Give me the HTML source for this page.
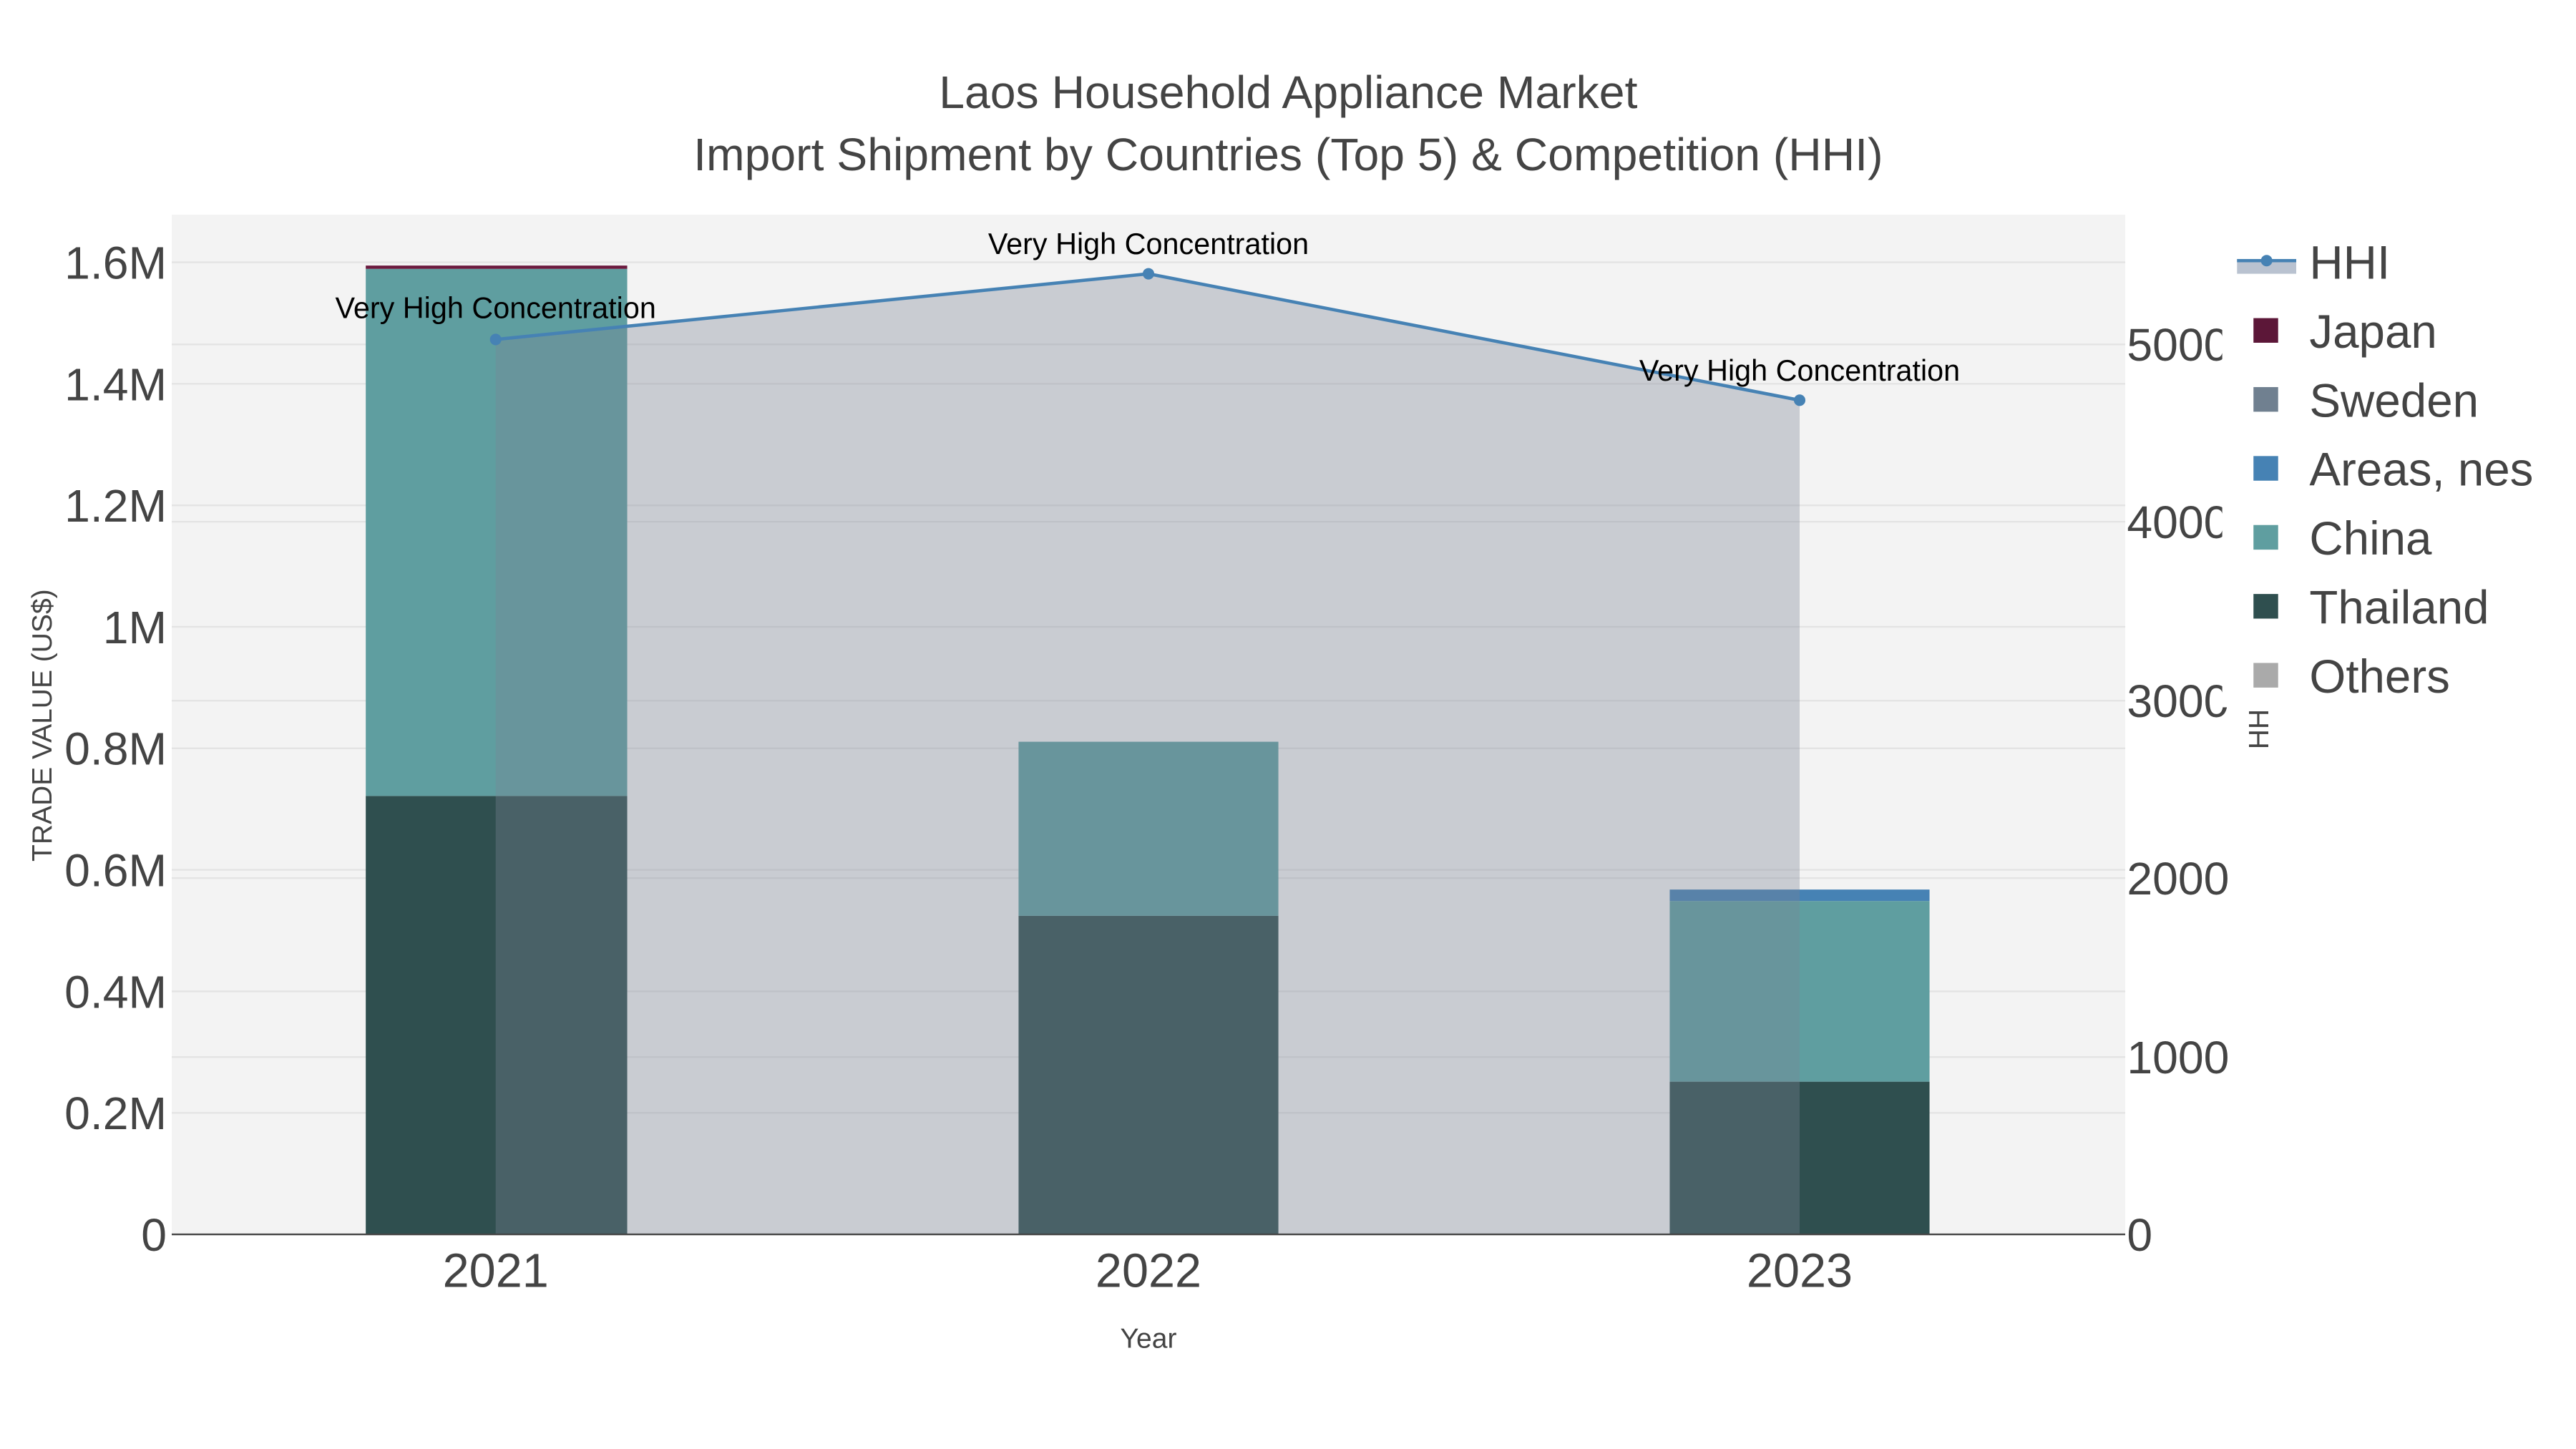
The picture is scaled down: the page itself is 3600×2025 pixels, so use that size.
<!DOCTYPE html>
<html><head><meta charset="utf-8"><style>
html,body{margin:0;padding:0;background:#fff;width:3600px;height:2025px;overflow:hidden}
svg{display:block}
text{font-family:"Liberation Sans",sans-serif}
</style></head><body>
<svg width="3600" height="2025" viewBox="0 0 1560 877.5" preserveAspectRatio="none" xmlns="http://www.w3.org/2000/svg">
<rect x="0" y="0" width="1560" height="877.5" fill="#fff"/>
<g transform="matrix(0.9958,0,0,0.9944,-0.56,0.73)">
<rect x="105" y="130" width="1188" height="621" fill="#f3f3f3"/>
<g stroke="#e3e3e3" stroke-width="1">
<line x1="105" x2="1293" y1="677" y2="677"/><line x1="105" x2="1293" y1="603" y2="603"/>
<line x1="105" x2="1293" y1="529" y2="529"/><line x1="105" x2="1293" y1="455" y2="455"/>
<line x1="105" x2="1293" y1="381" y2="381"/><line x1="105" x2="1293" y1="307" y2="307"/>
<line x1="105" x2="1293" y1="233" y2="233"/><line x1="105" x2="1293" y1="159" y2="159"/>
<line x1="105" x2="1293" y1="643" y2="643"/><line x1="105" x2="1293" y1="534" y2="534"/>
<line x1="105" x2="1293" y1="426" y2="426"/><line x1="105" x2="1293" y1="317" y2="317"/>
<line x1="105" x2="1293" y1="209" y2="209"/>
</g>
<rect x="223" y="484" width="159" height="267" fill="#2f4f4f"/>
<rect x="223" y="163" width="159" height="321" fill="#5f9ea0"/>
<rect x="223" y="161" width="159" height="2" fill="#6b1a3e"/>
<rect x="620" y="557" width="158" height="194" fill="#2f4f4f"/>
<rect x="620" y="451" width="158" height="106" fill="#5f9ea0"/>
<rect x="1016" y="658" width="158" height="93" fill="#2f4f4f"/>
<rect x="1016" y="548" width="158" height="110" fill="#5f9ea0"/>
<rect x="1016" y="541" width="158" height="7" fill="#4682b4"/>
<path d="M302,206 L699,166 L1095,243 L1095,751 L302,751 Z" fill="rgba(123,133,148,0.35)"/>
<polyline points="302,206 699,166 1095,243" fill="none" stroke="#4682b4" stroke-width="2"/>
<circle cx="302" cy="206" r="3.5" fill="#4682b4"/><circle cx="699" cy="166" r="3.5" fill="#4682b4"/><circle cx="1095" cy="243" r="3.5" fill="#4682b4"/>
<line x1="105" x2="1293" y1="751" y2="751" stroke="#444" stroke-width="1"/>
<g font-size="18" fill="#000" text-anchor="middle">
<text x="302" y="193">Very High Concentration</text>
<text x="699" y="154">Very High Concentration</text>
<text x="1095" y="231">Very High Concentration</text>
</g>
<g fill="#444" text-anchor="middle" font-size="28">
<text x="784" y="65">Laos Household Appliance Market</text>
<text x="784" y="103">Import Shipment by Countries (Top 5) &amp; Competition (HHI)</text>
</g>
<g fill="#444" font-size="28" text-anchor="end">
<text x="102" y="761">0</text><text x="102" y="687">0.2M</text><text x="102" y="613">0.4M</text>
<text x="102" y="539">0.6M</text><text x="102" y="465">0.8M</text><text x="102" y="391">1M</text>
<text x="102" y="317">1.2M</text><text x="102" y="243">1.4M</text><text x="102" y="169">1.6M</text>
</g>
<g fill="#444" font-size="28">
<text x="1294" y="761">0</text><text x="1294" y="653">1000</text><text x="1294" y="544">2000</text>
<text x="1294" y="436">3000</text><text x="1294" y="327">4000</text><text x="1294" y="219">5000</text>
</g>
<g fill="#444" font-size="29" text-anchor="middle">
<text x="302" y="783">2021</text><text x="699" y="783">2022</text><text x="1095" y="783">2023</text>
</g>
<text x="699" y="820" font-size="17" fill="#444" text-anchor="middle">Year</text>
<text transform="translate(32,441) rotate(-90)" font-size="17" fill="#444" text-anchor="middle">TRADE VALUE (US$)</text>
<text transform="translate(1380,441) rotate(-90)" font-size="17" fill="#444" text-anchor="middle">HHI</text>
<rect x="1352" y="140" width="208" height="290" fill="#fff"/>
<g font-size="28.5" fill="#444">
<rect x="1361" y="157" width="36" height="9" fill="#b9c2d0"/>
<line x1="1361" x2="1397" y1="158" y2="158" stroke="#4682b4" stroke-width="2"/>
<circle cx="1379" cy="158" r="3.5" fill="#4682b4"/>
<text x="1405" y="169">HHI</text>
<rect x="1371" y="193" width="15" height="15" fill="#5c1738"/><text x="1405" y="211">Japan</text>
<rect x="1371" y="235" width="15" height="15" fill="#708090"/><text x="1405" y="253">Sweden</text>
<rect x="1371" y="277" width="15" height="15" fill="#4682b4"/><text x="1405" y="295">Areas, nes</text>
<rect x="1371" y="319" width="15" height="15" fill="#5f9ea0"/><text x="1405" y="337">China</text>
<rect x="1371" y="361" width="15" height="15" fill="#2f4f4f"/><text x="1405" y="379">Thailand</text>
<rect x="1371" y="403" width="15" height="15" fill="#aaaaaa"/><text x="1405" y="421">Others</text>
</g>
</g>
</svg>
</body></html>
